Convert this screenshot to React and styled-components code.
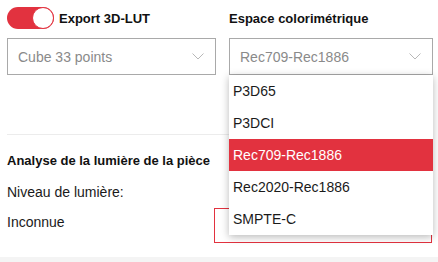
import React from "react";
import styled, { createGlobalStyle } from "styled-components";

const GlobalStyle = createGlobalStyle`
  html, body {
    margin: 0;
    padding: 0;
    background: #fff;
    font-family: "Liberation Sans", Arial, sans-serif;
    color: #1a1a1a;
  }
`;

const Page = styled.div`
  width: 438px;
  height: 262px;
  overflow: hidden;
  position: relative;
  display: flex;
  flex-direction: column;
`;

const Content = styled.div`
  flex: 1;
  padding: 7px 5px 0 7px;
`;

const TopGrid = styled.div`
  display: grid;
  grid-template-columns: 209px 204px;
  column-gap: 13px;
`;

const Field = styled.div`
  display: flex;
  flex-direction: column;
  position: relative;
`;

const LabelRow = styled.div`
  display: flex;
  align-items: center;
  gap: 5px;
  height: 22px;
  margin-bottom: 9px;
`;

const Label = styled.span`
  font-weight: bold;
  font-size: 13px;
  color: #111;
`;

const Toggle = styled.div`
  width: 47px;
  height: 22px;
  border-radius: 11px;
  background: #e2323f;
  position: relative;
  flex-shrink: 0;
`;

const Knob = styled.div`
  position: absolute;
  right: 0;
  top: 0;
  width: 20px;
  height: 20px;
  border-radius: 50%;
  background: #fff;
  border: 1px solid #e2323f;
`;

const Select = styled.div`
  height: 37px;
  box-sizing: border-box;
  border: 1px solid #a9a9a9;
  display: flex;
  align-items: center;
  justify-content: space-between;
  padding: 0 11px 0 10px;
  font-size: 14px;
  color: #8a8a8a;
  background: #fff;
`;

const Chevron = () => (
  <svg width="12" height="7" viewBox="0 0 12 7">
    <path d="M0.5 0.5 L6 6 L11.5 0.5" fill="none" stroke="#b8b8b8" strokeWidth="1" />
  </svg>
);

const Menu = styled.ul`
  position: absolute;
  top: 68px;
  left: 0;
  width: 204px;
  margin: 0;
  padding: 0;
  list-style: none;
  background: #fff;
  box-shadow: 0 2px 8px rgba(0, 0, 0, 0.28);
  z-index: 2;
`;

const MenuItem = styled.li`
  height: 32px;
  display: flex;
  align-items: center;
  padding-left: 4px;
  font-size: 14px;
  color: ${(p) => (p.$active ? "#fff" : "#1a1a1a")};
  background: ${(p) => (p.$active ? "#e2323f" : "#fff")};
`;

const Divider = styled.hr`
  border: none;
  border-top: 1px solid #ececec;
  margin: 59px 0 0 0;
`;

const SectionTitle = styled.div`
  font-weight: bold;
  font-size: 13px;
  color: #111;
  margin-top: 18px;
`;

const Text = styled.div`
  font-size: 14px;
  color: #1a1a1a;
  margin-top: ${(p) => p.$top ?? 16}px;
`;

const ValueRow = styled.div`
  display: grid;
  grid-template-columns: 207px 218px;
  align-items: start;
  margin-top: 8px;
`;

const OutlineBox = styled.div`
  height: 35px;
  box-sizing: border-box;
  border: 1px solid #e2323f;
`;

const BottomStrip = styled.div`
  height: 5px;
  background: #f4f4f4;
`;

const options = ["P3D65", "P3DCI", "Rec709-Rec1886", "Rec2020-Rec1886", "SMPTE-C"];

export default function App() {
  return (
    <>
      <GlobalStyle />
      <Page>
        <Content>
          <TopGrid>
            <Field>
              <LabelRow>
                <Toggle>
                  <Knob />
                </Toggle>
                <Label>Export 3D-LUT</Label>
              </LabelRow>
              <Select>
                Cube 33 points
                <Chevron />
              </Select>
            </Field>
            <Field>
              <LabelRow>
                <Label>Espace colorimétrique</Label>
              </LabelRow>
              <Select>
                Rec709-Rec1886
                <Chevron />
              </Select>
              <Menu>
                {options.map((o) => (
                  <MenuItem key={o} $active={o === "Rec709-Rec1886"}>
                    {o}
                  </MenuItem>
                ))}
              </Menu>
            </Field>
          </TopGrid>
          <Divider />
          <SectionTitle>Analyse de la lumière de la pièce</SectionTitle>
          <Text>Niveau de lumière:</Text>
          <ValueRow>
            <Text $top={6}>Inconnue</Text>
            <OutlineBox />
          </ValueRow>
        </Content>
        <BottomStrip />
      </Page>
    </>
  );
}
